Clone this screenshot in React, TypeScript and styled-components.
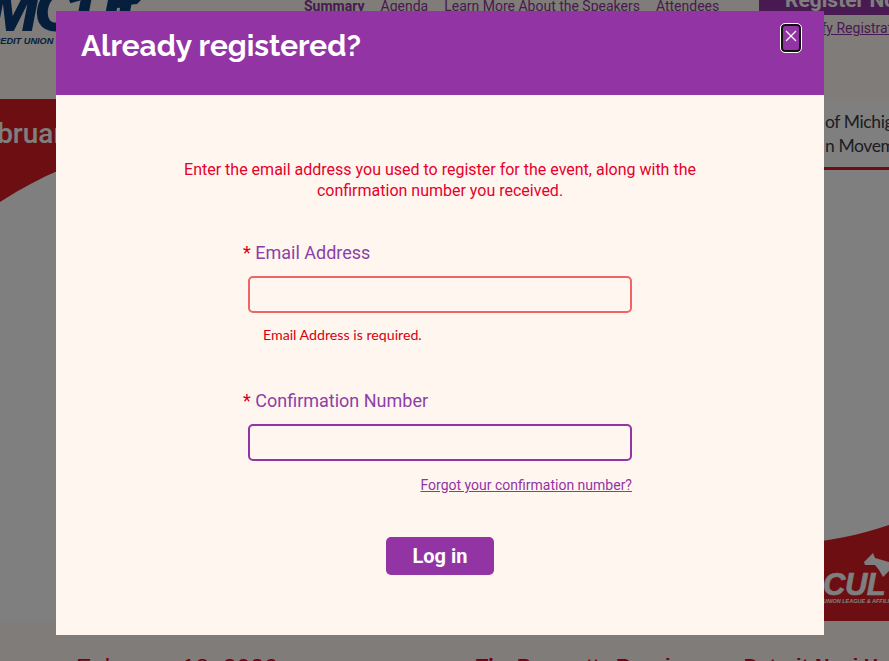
import React from 'react';
import styled, { createGlobalStyle } from 'styled-components';

const GlobalStyle = createGlobalStyle`
  html, body {
    margin: 0;
    padding: 0;
    height: 100%;
    overflow: hidden;
    background: #fff8f3;
    font-family: Roboto, "Liberation Sans", sans-serif;
  }
  * { box-sizing: border-box; }
`;

const purple = '#9334a4';
const red = '#e6002b';

const Page = styled.div`
  height: 661px;
  overflow: hidden;
  display: flex;
  flex-direction: column;
  background: #fff8f3;
`;

const Header = styled.header`
  height: 99px;
  flex: none;
  display: flex;
  align-items: flex-start;
`;

const Logo = styled.div`
  width: 304px;
  flex: none;
  margin-top: -13px;
  color: #0a3d78;
  overflow: hidden;
`;

const LogoTop = styled.div`
  display: flex;
  align-items: flex-start;
`;

const LogoMark = styled.div`
  width: 124px;
  flex: none;
  font: italic 900 60px/46px "Liberation Sans", sans-serif;
  letter-spacing: -3px;
  margin-left: -12px;
  -webkit-text-stroke: 2px #0a3d78;
`;

const LogoMitten = styled.svg`
  width: 32px;
  height: 24px;
  flex: none;
  margin-left: -2px;
  color: #0a3d78;
`;

const LogoLine = styled.div`
  font: italic 700 9.2px/12px "Liberation Sans", sans-serif;
  margin: 2px 0 0 -13px;
  white-space: nowrap;
`;

const Nav = styled.nav`
  display: flex;
  gap: 16px;
  margin-top: -3px;
  width: 455px;
  flex: none;
`;

const NavItem = styled.a<{ $active?: boolean }>`
  font-size: 14px;
  line-height: 18px;
  color: ${purple};
  font-weight: ${(p) => (p.$active ? 700 : 400)};
  white-space: nowrap;
`;

const RegisterColumn = styled.div`
  flex: 1;
  min-width: 0;
  display: flex;
  flex-direction: column;
`;

const RegisterButton = styled.div`
  height: 15px;
  background: ${purple};
  color: #fff;
  font-size: 21px;
  font-weight: 700;
  line-height: 0;
  padding: 0 0 0 26px;
  white-space: nowrap;
  overflow: hidden;
`;

const ModifyLink = styled.a`
  margin: 5px 0 0 31px;
  font-size: 14px;
  line-height: 16px;
  color: ${purple};
  text-decoration: underline;
  white-space: nowrap;
`;

const Banner = styled.section`
  position: relative;
  height: 522px;
  flex: none;
  background: #ffffff;
  overflow: hidden;
`;

const BannerArt = styled.svg`
  position: absolute;
  inset: 0;
  width: 100%;
  height: 100%;
`;

const Month = styled.div`
  position: absolute;
  left: -33px;
  top: 20px;
  font: 500 28px/30px Roboto, sans-serif;
  color: #fff;
`;

const Venue = styled.div`
  position: absolute;
  left: 825px;
  top: 11px;
  width: 200px;
  font: 400 17.5px/24px Lato, sans-serif;
  letter-spacing: -0.4px;
  color: #3a3a44;
  white-space: nowrap;
`;

const VenueRule = styled.div`
  position: absolute;
  left: 760px;
  right: 0;
  top: 68px;
  height: 3px;
  background: #d81c24;
`;

const CornerLogo = styled.div`
  position: absolute;
  left: 823px;
  top: 470px;
  color: #fff;
  white-space: nowrap;
`;

const CornerMark = styled.div`
  font: italic 900 31px/32px "Liberation Sans", sans-serif;
  letter-spacing: -0.5px;
  -webkit-text-stroke: 0.6px #fff;
`;

const CornerLine = styled.div`
  margin-top: -4px;
  font: italic 700 5.5px/8px "Liberation Sans", sans-serif;
`;

const InfoStrip = styled.section`
  flex: 1;
  display: flex;
  padding: 0 0 0 76px;
  color: ${red};
  font-family: "Liberation Sans", sans-serif;
  white-space: nowrap;
`;

const EventDate = styled.div`
  width: 400px;
  flex: none;
  margin-top: 33px;
  font-size: 24.7px;
  line-height: 28px;
`;

const EventPlace = styled.div`
  margin-top: 31px;
  font-size: 20px;
  font-weight: 700;
  line-height: 28px;
`;

const Overlay = styled.div`
  position: fixed;
  inset: 0;
  background: rgba(0, 0, 0, 0.5);
  padding: 11px 65px 26px 56px;
`;

const Modal = styled.div`
  height: 100%;
  display: flex;
  flex-direction: column;
  background: #fff6f0;
`;

const ModalHeader = styled.div`
  height: 84px;
  flex: none;
  background: ${purple};
  display: flex;
  justify-content: space-between;
  align-items: flex-start;
  padding: 13px 23px 0 25px;
`;

const ModalTitle = styled.h2`
  margin: 3px 0 0;
  font: 700 29.8px/38px Raleway, Lato, sans-serif;
  color: #fff;
`;

const CloseButton = styled.button`
  width: 20px;
  height: 28px;
  padding: 4px 0 0;
  display: flex;
  justify-content: center;
  align-items: flex-start;
  background: transparent;
  border: 2px solid #111;
  border-radius: 4px;
  outline: 1px solid #fff;
  color: #fff;
`;

const ModalBody = styled.div`
  flex: 1;
  display: flex;
  flex-direction: column;
  align-items: center;
  padding-top: 64px;
`;

const Message = styled.p`
  margin: 0;
  width: 540px;
  text-align: center;
  font-size: 16px;
  line-height: 21px;
  color: ${red};
`;

const Form = styled.form`
  width: 389px;
  margin: 39px 0 0 187px;
  align-self: flex-start;
  display: flex;
  flex-direction: column;
`;

const Field = styled.div`
  display: flex;
  flex-direction: column;
`;

const Label = styled.label`
  font-size: 18px;
  line-height: 26px;
  color: #8c3fa6;
`;

const Star = styled.span`
  color: #d4000f;
  margin-right: 4.5px;
`;

const Input = styled.input<{ $invalid?: boolean }>`
  display: block;
  margin: 10px 0 0 5px;
  width: 384px;
  height: 37px;
  background: transparent;
  border: 2px solid ${(p) => (p.$invalid ? '#f06464' : purple)};
  border-radius: 5px;
  outline: none;
`;

const ErrorText = styled.div`
  margin: 13px 0 0 20px;
  height: 62px;
  font: 400 14.2px/18px Lato, sans-serif;
  color: #d4000f;
`;

const ForgotLink = styled.a`
  align-self: flex-end;
  margin-top: 15px;
  font-size: 14px;
  line-height: 18px;
  color: ${purple};
  text-decoration: underline;
`;

const LogIn = styled.button`
  align-self: center;
  width: 108px;
  height: 38px;
  margin: 43px 0 0 5px;
  background: ${purple};
  border: none;
  border-radius: 5px;
  color: #fff;
  font: 700 20px/38px Roboto, sans-serif;
  padding: 0;
`;

const App = () => {
  return (
    <>
      <GlobalStyle />
      <Page>
        <Header>
          <Logo>
            <LogoTop>
              <LogoMark>MCUL</LogoMark>
              <LogoMitten viewBox="0 0 32 24">
                <path d="M1 16l6-5 3-6 3 2 5-1 1-3 4 2 4-3 4 3v8l-4 4-10 1-8 3-8-1Z" fill="currentColor" />
              </LogoMitten>
            </LogoTop>
            <LogoLine>CREDIT UNION LEAGUE &amp; AFFILIATES</LogoLine>
          </Logo>
          <Nav>
            <NavItem $active>Summary</NavItem>
            <NavItem>Agenda</NavItem>
            <NavItem>Learn More About the Speakers</NavItem>
            <NavItem>Attendees</NavItem>
          </Nav>
          <RegisterColumn>
            <RegisterButton>Register Now</RegisterButton>
            <ModifyLink>Modify Registration</ModifyLink>
          </RegisterColumn>
        </Header>
        <Banner>
          <BannerArt viewBox="0 0 889 522" preserveAspectRatio="none">
            <path d="M0 0H120V52C70 62 30 84 0 103Z" fill="#d81c24" />
            <path d="M889 426C860 436 830 442 790 446V522H889Z" fill="#d81c24" />
            <path d="M864 463L873 454L875 459L889 463V472L883 478L879 471L875 466L865 466Z" fill="#fff" />
          </BannerArt>
          <Month>February</Month>
          <Venue>
            of Michigan
            <br />
            n Movement
          </Venue>
          <VenueRule />
          <CornerLogo>
            <CornerMark>CUL</CornerMark>
            <CornerLine>UNION LEAGUE &amp; AFFILIATES</CornerLine>
          </CornerLogo>
        </Banner>
        <InfoStrip>
          <EventDate>February 18, 2026</EventDate>
          <EventPlace>The Baronette Renaissance Detroit-Novi Hotel</EventPlace>
        </InfoStrip>
      </Page>
      <Overlay>
        <Modal>
          <ModalHeader>
            <ModalTitle>Already registered?</ModalTitle>
            <CloseButton aria-label="Close">
              <svg width="12" height="12" viewBox="0 0 12 12">
                <path d="M1 1L11 11M11 1L1 11" stroke="currentColor" strokeWidth="1.2" />
              </svg>
            </CloseButton>
          </ModalHeader>
          <ModalBody>
            <Message>
              Enter the email address you used to register for the event, along with the confirmation number you
              received.
            </Message>
            <Form>
              <Field>
                <Label>
                  <Star>*</Star>Email Address
                </Label>
                <Input $invalid />
                <ErrorText>Email Address is required.</ErrorText>
              </Field>
              <Field>
                <Label>
                  <Star>*</Star>Confirmation Number
                </Label>
                <Input />
              </Field>
              <ForgotLink>Forgot your confirmation number?</ForgotLink>
              <LogIn type="button">Log in</LogIn>
            </Form>
          </ModalBody>
        </Modal>
      </Overlay>
    </>
  );
};

export default App;
